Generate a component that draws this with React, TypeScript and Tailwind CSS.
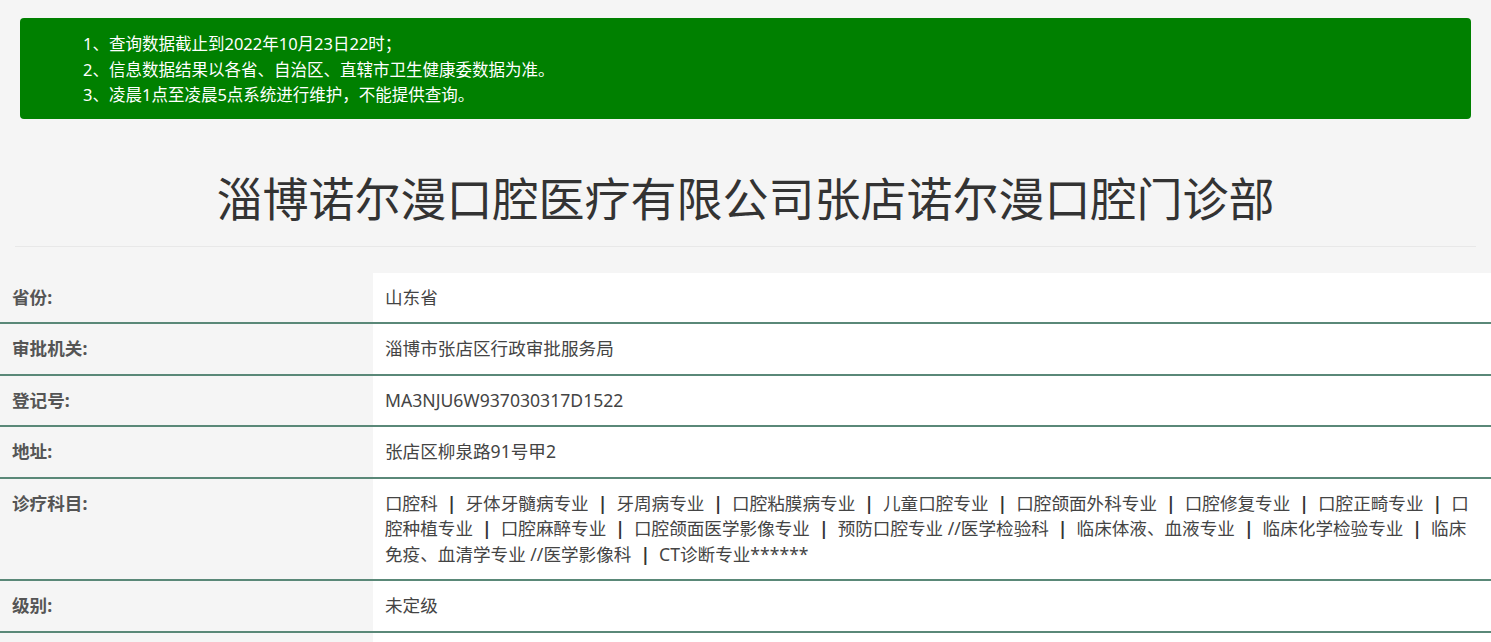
const notices = [
  "1、查询数据截止到2022年10月23日22时；",
  "2、信息数据结果以各省、自治区、直辖市卫生健康委数据为准。",
  "3、凌晨1点至凌晨5点系统进行维护，不能提供查询。",
];

const subjects = [
  "口腔科",
  "牙体牙髓病专业",
  "牙周病专业",
  "口腔粘膜病专业",
  "儿童口腔专业",
  "口腔颌面外科专业",
  "口腔修复专业",
  "口腔正畸专业",
  "口腔种植专业",
  "口腔麻醉专业",
  "口腔颌面医学影像专业",
  "预防口腔专业 //医学检验科",
  "临床体液、血液专业",
  "临床化学检验专业",
  "临床免疫、血清学专业 //医学影像科",
  "CT诊断专业******",
];

function Subjects() {
  return (
    <>
      {subjects.map((s, i) => (
        <span key={s}>
          {i > 0 && <span className="mx-[9px] font-bold text-[#333]">|</span>}
          {s}
        </span>
      ))}
    </>
  );
}

const rows: { label: string; value: React.ReactNode }[] = [
  { label: "省份:", value: "山东省" },
  { label: "审批机关:", value: "淄博市张店区行政审批服务局" },
  { label: "登记号:", value: "MA3NJU6W937030317D1522" },
  { label: "地址:", value: "张店区柳泉路91号甲2" },
  { label: "诊疗科目:", value: <Subjects /> },
  { label: "级别:", value: "未定级" },
  { label: "", value: "" },
];

export default function App() {
  return (
    <div
      className="min-h-screen bg-[#f5f5f5] text-[#333]"
      style={{ fontFamily: '"Noto Sans", "Noto Sans CJK SC", sans-serif' }}
    >
      {/* notice */}
      <div className="px-[20px] pt-[18px]">
        <div className="rounded-[4px] bg-[#008000] pl-[63px] pt-[13px] pb-[11px] text-[16.5px] leading-[25.5px] text-white">
          {notices.map((n) => (
            <div key={n}>{n}</div>
          ))}
        </div>
      </div>

      {/* title */}
      <div className="mx-[15px] border-b border-[#e8e8e8] pt-[48px] pb-[17px] text-center">
        <h1 className="text-[46px] font-normal leading-[62px] text-[#333]">
          淄博诺尔漫口腔医疗有限公司张店诺尔漫口腔门诊部
        </h1>
      </div>

      {/* detail table */}
      <div className="mt-[26px]">
        {rows.map((r, i) => (
          <div key={i} className="flex border-b-2 border-[#5a8878]">
            <div className="w-[373px] shrink-0 px-[12px] py-[12px] text-[17.6px] font-bold leading-[25.5px] text-[#555]">
              {r.label}
            </div>
            <div className="flex-1 bg-white px-[12px] py-[12px] text-[17.6px] leading-[25.5px] text-[#444]">
              {r.value}
            </div>
          </div>
        ))}
      </div>
    </div>
  );
}
